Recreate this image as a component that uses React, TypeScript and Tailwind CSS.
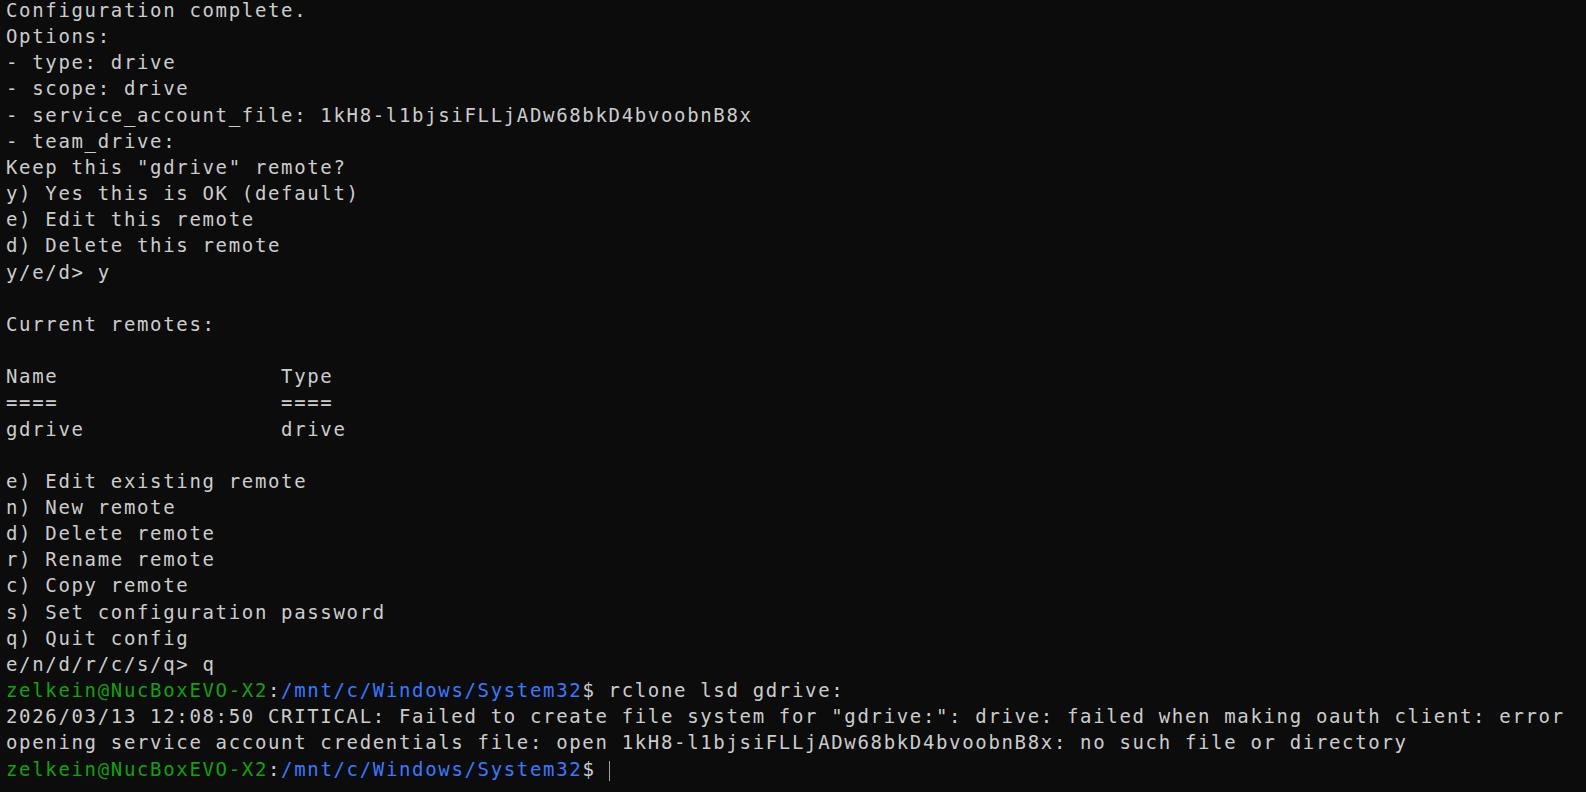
const G = 'text-[#13a10e]';
const B = 'text-[#3b78ff]';

type Seg = { t: string; c?: string };

const plain = (t: string): Seg[] => [{ t }];

const prompt = (cmd: string): Seg[] => [
  { t: 'zelkein@NucBoxEVO-X2', c: G },
  { t: ':' },
  { t: '/mnt/c/Windows/System32', c: B },
  { t: '$ ' + cmd },
];

const lines: Seg[][] = [
  plain('Configuration complete.'),
  plain('Options:'),
  plain('- type: drive'),
  plain('- scope: drive'),
  plain('- service_account_file: 1kH8-l1bjsiFLLjADw68bkD4bvoobnB8x'),
  plain('- team_drive:'),
  plain('Keep this "gdrive" remote?'),
  plain('y) Yes this is OK (default)'),
  plain('e) Edit this remote'),
  plain('d) Delete this remote'),
  plain('y/e/d> y'),
  plain(''),
  plain('Current remotes:'),
  plain(''),
  plain('Name                 Type'),
  plain('====                 ===='),
  plain('gdrive               drive'),
  plain(''),
  plain('e) Edit existing remote'),
  plain('n) New remote'),
  plain('d) Delete remote'),
  plain('r) Rename remote'),
  plain('c) Copy remote'),
  plain('s) Set configuration password'),
  plain('q) Quit config'),
  plain('e/n/d/r/c/s/q> q'),
  prompt('rclone lsd gdrive:'),
  plain('2026/03/13 12:08:50 CRITICAL: Failed to create file system for "gdrive:": drive: failed when making oauth client: error'),
  plain('opening service account credentials file: open 1kH8-l1bjsiFLLjADw68bkD4bvoobnB8x: no such file or directory'),
];

export default function App() {
  return (
    <div className="w-[1586px] h-[792px] overflow-hidden bg-[#0c0c0c] text-[#cccccc] pl-[6px] pt-0">
      <div
        className="-mt-[3px] whitespace-pre text-[19px] leading-[26.16px] tracking-[1.66px]"
        style={{ fontFamily: '"DejaVu Sans Mono", "Liberation Mono", monospace' }}
      >
        {lines.map((segs, i) => (
          <div key={i} className="h-[26.16px]">
            {segs.map((s, j) => (
              <span key={j} className={s.c}>
                {s.t}
              </span>
            ))}
          </div>
        ))}
        {/* last prompt with cursor */}
        <div className="h-[26.16px] flex items-center">
          {prompt('').map((s, j) => (
            <span key={j} className={s.c}>
              {s.t}
            </span>
          ))}
          <span className="inline-block w-[1px] h-[20px] bg-[#a0a0a0] mt-[4px]" />
        </div>
      </div>
    </div>
  );
}
